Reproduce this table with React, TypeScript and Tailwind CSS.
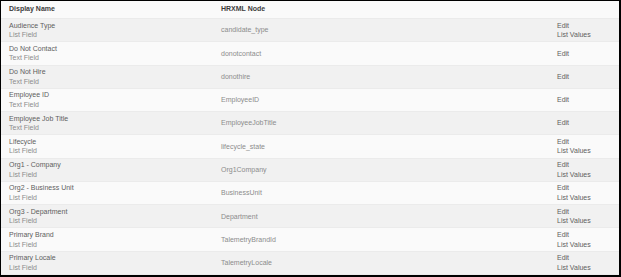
const rows: { name: string; type: string; node: string; list: boolean }[] = [
  { name: "Audience Type", type: "List Field", node: "candidate_type", list: true },
  { name: "Do Not Contact", type: "Text Field", node: "donotcontact", list: false },
  { name: "Do Not Hire", type: "Text Field", node: "donothire", list: false },
  { name: "Employee ID", type: "Text Field", node: "EmployeeID", list: false },
  { name: "Employee Job Title", type: "Text Field", node: "EmployeeJobTitle", list: false },
  { name: "Lifecycle", type: "List Field", node: "lifecycle_state", list: true },
  { name: "Org1 - Company", type: "List Field", node: "Org1Company", list: true },
  { name: "Org2 - Business Unit", type: "List Field", node: "BusinessUnit", list: true },
  { name: "Org3 - Department", type: "List Field", node: "Department", list: true },
  { name: "Primary Brand", type: "List Field", node: "TalemetryBrandId", list: true },
  { name: "Primary Locale", type: "List Field", node: "TalemetryLocale", list: true },
];

export default function App() {
  return (
    <div
      className="w-[621px] h-[277px] border-t border-l border-r-2 border-b-2 border-black bg-[#fafafa] flex flex-col overflow-hidden"
      style={{ fontFamily: '"Liberation Sans", Arial, sans-serif' }}
    >
      <div className="h-[18px] flex items-center text-[7px] font-bold text-[#3d3d3d] border-b border-[#ebebeb]">
        <div className="w-[220px] pl-[8px]">Display Name</div>
        <div className="flex-1">HRXML Node</div>
      </div>
      {rows.map((r, i) => (
        <div
          key={r.name}
          className={`h-[23.27px] flex items-center text-[7px] leading-[9.5px] border-b border-[#ebebeb] ${
            i % 2 === 0 ? "bg-[#f1f1f1]" : "bg-[#fafafa]"
          }`}
        >
          <div className="w-[220px] pl-[8px]">
            <div className="text-[#5e5e5e]">{r.name}</div>
            <div className="text-[#8c8c8c]">{r.type}</div>
          </div>
          <div className="w-[336px] text-[#8c8c8c]">{r.node}</div>
          <div className="flex-1 text-[#5e5e5e]">
            <div>Edit</div>
            {r.list && <div>List Values</div>}
          </div>
        </div>
      ))}
    </div>
  );
}
